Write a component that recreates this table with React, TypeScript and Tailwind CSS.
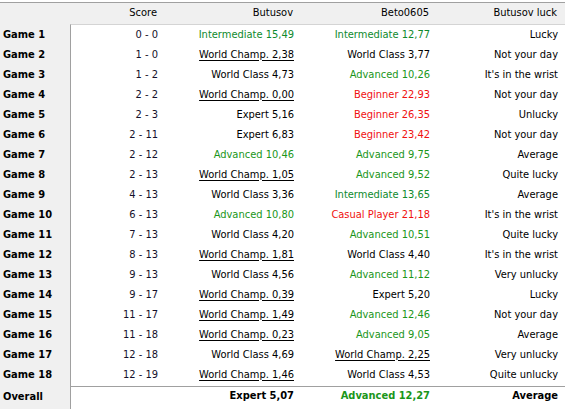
import React from "react";

type Cell = { t: string; c?: "g" | "i" | "r"; u?: boolean };

const rows: [string, Cell, Cell, string][] = [
  ["0 - 0", { t: "Intermediate 15,49", c: "i" }, { t: "Intermediate 12,77", c: "i" }, "Lucky"],
  ["1 - 0", { t: "World Champ. 2,38", u: true }, { t: "World Class 3,77" }, "Not your day"],
  ["1 - 2", { t: "World Class 4,73" }, { t: "Advanced 10,26", c: "g" }, "It's in the wrist"],
  ["2 - 2", { t: "World Champ. 0,00", u: true }, { t: "Beginner 22,93", c: "r" }, "Not your day"],
  ["2 - 3", { t: "Expert 5,16" }, { t: "Beginner 26,35", c: "r" }, "Unlucky"],
  ["2 - 11", { t: "Expert 6,83" }, { t: "Beginner 23,42", c: "r" }, "Not your day"],
  ["2 - 12", { t: "Advanced 10,46", c: "g" }, { t: "Advanced 9,75", c: "g" }, "Average"],
  ["2 - 13", { t: "World Champ. 1,05", u: true }, { t: "Advanced 9,52", c: "g" }, "Quite lucky"],
  ["4 - 13", { t: "World Class 3,36" }, { t: "Intermediate 13,65", c: "i" }, "Average"],
  ["6 - 13", { t: "Advanced 10,80", c: "g" }, { t: "Casual Player 21,18", c: "r" }, "It's in the wrist"],
  ["7 - 13", { t: "World Class 4,20" }, { t: "Advanced 10,51", c: "g" }, "Quite lucky"],
  ["8 - 13", { t: "World Champ. 1,81", u: true }, { t: "World Class 4,40" }, "It's in the wrist"],
  ["9 - 13", { t: "World Class 4,56" }, { t: "Advanced 11,12", c: "g" }, "Very unlucky"],
  ["9 - 17", { t: "World Champ. 0,39", u: true }, { t: "Expert 5,20" }, "Lucky"],
  ["11 - 17", { t: "World Champ. 1,49", u: true }, { t: "Advanced 12,46", c: "g" }, "Not your day"],
  ["11 - 18", { t: "World Champ. 0,23", u: true }, { t: "Advanced 9,05", c: "g" }, "Average"],
  ["12 - 18", { t: "World Class 4,69" }, { t: "World Champ. 2,25", u: true }, "Very unlucky"],
  ["12 - 19", { t: "World Champ. 1,46", u: true }, { t: "World Class 4,53" }, "Quite unlucky"],
];

function colorOf(c?: string) {
  if (c === "g") return "text-[#1a961a]";
  if (c === "i") return "text-[#0e8a2c]";
  if (c === "r") return "text-[#f01010]";
  return "text-black";
}

function Rating({ cell }: { cell: Cell }) {
  return (
    <div className={`w-[136px] pr-[4px] text-right ${colorOf(cell.c)}`}>
      <span className={cell.u ? "underline underline-offset-2" : ""}>{cell.t}</span>
    </div>
  );
}

export default function App() {
  return (
    <div
      className="w-[565px] h-[409px] bg-white overflow-hidden text-[11px] text-black pt-[2px]"
      style={{ fontFamily: '"DejaVu Sans Condensed", "Liberation Sans", sans-serif' }}
    >
      {/* header */}
      <div className="flex h-[22px] items-center border-t border-[#a0a0a0] bg-[#f0f0f0]">
        <div className="w-[70px]" />
        <div className="w-[91px] pr-[4px] text-right">Score</div>
        <div className="w-[136px] pr-[4px] text-right">Butusov</div>
        <div className="w-[136px] pr-[4px] text-right">Beto0605</div>
        <div className="w-[128px] pr-[4px] text-right">Butusov luck</div>
      </div>

      <div className="flex">
        {/* row labels */}
        <div className="w-[70px] bg-[#f0f0f0] h-[400px] font-bold pl-[3px]">
          <div className="h-[1px]" />
          {rows.map((_, i) => (
            <div key={i} className="h-[20px] leading-[20px]">
              Game {i + 1}
            </div>
          ))}
          <div className="h-[2px]" />
          <div className="h-[20px] leading-[20px]">Overall</div>
        </div>

        {/* values */}
        <div className="flex-1 border-l border-t border-l-[#a0a0a0] border-t-[#d4d4d4] h-[400px]">
          {rows.map((r, i) => (
            <div key={i} className="flex h-[20px] items-center">
              <div className="w-[91px] pr-[4px] text-right text-[#14102a]">{r[0]}</div>
              <Rating cell={r[1]} />
              <Rating cell={r[2]} />
              <div className="w-[128px] pr-[4px] text-right">{r[3]}</div>
            </div>
          ))}
          <div className="flex h-[20px] items-center border-t border-[#a0a0a0] mt-[1px] font-bold">
            <div className="w-[91px]" />
            <div className="w-[136px] pr-[4px] text-right">Expert 5,07</div>
            <div className="w-[136px] pr-[4px] text-right text-[#1a961a]">Advanced 12,27</div>
            <div className="w-[128px] pr-[4px] text-right">Average</div>
          </div>
        </div>
      </div>
    </div>
  );
}
